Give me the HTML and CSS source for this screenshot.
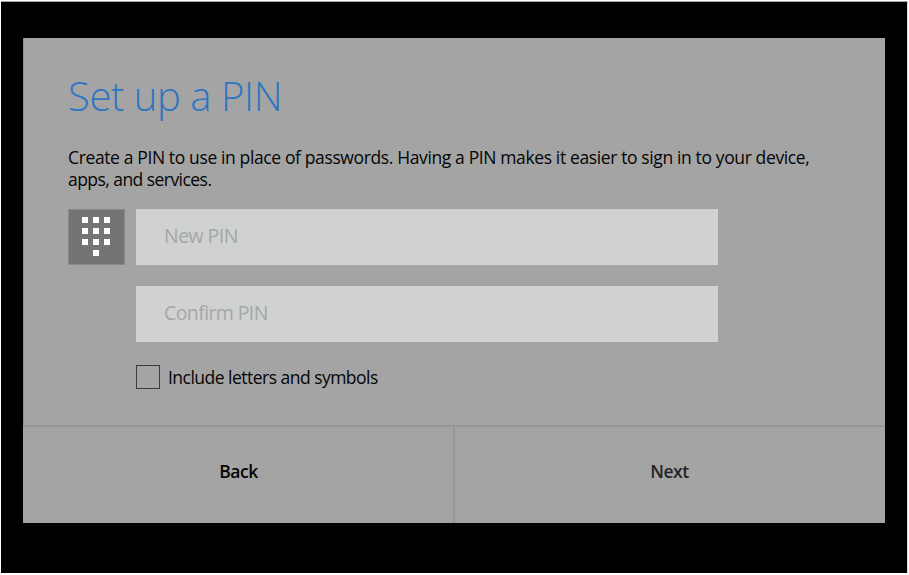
FILE: index.html
```html
<!DOCTYPE html>
<html lang="en">
<head>
<meta charset="utf-8">
<title>Set up a PIN</title>
<link rel="stylesheet" href="styles.css">
</head>
<body>
<div class="screen">
<main class="dialog">
<section class="content">
<h1><span>Set up a PIN</span></h1>
<p><span class="line line-one">Create a PIN to use in place of passwords. Having a PIN makes it easier to sign in to your device,</span> <span class="line line-two">apps, and services.</span></p>
<div class="form">
<div class="keypad">
<svg width="57" height="56" viewBox="0 0 57 56" fill="#fff"><path d="M14 8h6v6h-6zM25 8h6v6h-6zM36 8h6v6h-6zM14 19h6v6h-6zM25 19h6v6h-6zM36 19h6v6h-6zM14 30h6v6h-6zM25 30h6v6h-6zM36 30h6v6h-6zM25 41h6v6h-6z"/></svg>
</div>
<div class="fields">
<div class="field"><span class="new">New PIN</span></div>
<div class="field"><span class="confirm">Confirm PIN</span></div>
<div class="option"><span class="box"></span><span class="label">Include letters and symbols</span></div>
</div>
</div>
</section>
<footer>
<div class="action back"><span>Back</span></div>
<div class="action next"><span>Next</span></div>
</footer>
</main>
</div>
</body>
</html>
```
FILE: styles.css
```css
* { box-sizing: border-box; }
body {
  margin: 0;
  width: 909px;
  height: 575px;
  overflow: hidden;
  background: #fff;
  font-family: "Open Sans", "Noto Sans", sans-serif;
  color: #050505;
}
.screen {
  width: 907px;
  height: 572px;
  margin-left: 1px;
  margin-top: 1px;
  padding: 36px 22px 0;
  background: #000;
  border-top: 1px solid #a5a8a8;
  border-right: 1px solid #d8dad8;
}
.dialog {
  width: 862px;
  height: 485px;
  background: #a4a4a4;
}
.content {
  height: 387px;
  padding: 31px 45px 0 44px;
  border-left: 1px solid #8c8c8c;
}
h1 {
  margin: 0;
  height: 54px;
  line-height: 54px;
  font-size: 40px;
  font-weight: 300;
  color: #2c76c2;
}
span { white-space: nowrap; }
h1 span { letter-spacing: -0.43px; }
p {
  margin: 23px 0 0;
  height: 44px;
  font-size: 17.5px;
  line-height: 22px;
}
.line { display: block; }
.line-one { letter-spacing: -0.375px; }
.line-two { letter-spacing: -0.55px; }
.form { display: flex; gap: 11px; margin-top: 19px; }
.keypad { width: 57px; height: 56px; background: #737475; outline: 1px solid #888; outline-offset: -1px; }
.keypad svg { display: block; }
.fields { width: 582px; }
.field {
  height: 56px;
  margin-bottom: 21px;
  padding-left: 28px;
  background: #d0d2d1;
  color: #a5a7a6;
  font-size: 19.5px;
  line-height: 53px;
}
.new { letter-spacing: -0.55px; }
.confirm { letter-spacing: -0.6px; }
.option { display: flex; align-items: center; gap: 8px; height: 24px; margin-top: 23px; font-size: 17.5px; }
.box { width: 24px; height: 24px; border: 1px solid #3b3b3b; }
.label { letter-spacing: -0.52px; }
footer { display: flex; height: 98px; border-top: 2px solid #969696; }
.action {
  width: 430px;
  height: 96px;
  line-height: 89px;
  text-align: center;
  font-size: 17.5px;
  font-weight: 600;
  letter-spacing: -0.5px;
}
.back { padding-left: 1px; }
.next { width: 432px; padding-right: 1px; border-left: 2px solid #969696; color: #242424; }
```
